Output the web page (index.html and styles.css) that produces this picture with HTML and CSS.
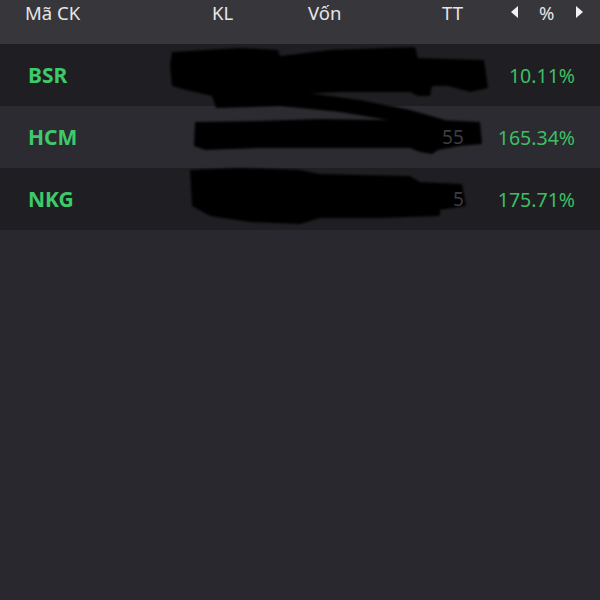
FILE: index.html
```html
<!DOCTYPE html>
<html>
<head>
<meta charset="utf-8">
<link rel="stylesheet" href="styles.css">
</head>
<body>
<div class="app">
  <div class="head">
    <div class="c-sym">Mã CK</div>
    <div class="c-kl">KL</div>
    <div class="c-von">Vốn</div>
    <div class="c-tt">TT</div>
    <div class="c-pct">
      <span class="tri tri-l"></span>
      <span>%</span>
      <span class="tri tri-r"></span>
    </div>
  </div>
  <div class="rows">
    <div class="row dark"><div class="sym">BSR</div><div class="val">10.11%</div></div>
    <div class="row light"><div class="sym">HCM</div><div class="ghost">55</div><div class="val">165.34%</div></div>
    <div class="row dark"><div class="sym">NKG</div><div class="ghost">5</div><div class="val">175.71%</div></div>
    <svg class="redact" width="600" height="190" viewBox="0 44 600 190">
      <filter id="b"><feGaussianBlur stdDeviation="1.2"/></filter>
      <g fill="#040405" filter="url(#b)">
        <path d="M172 52 L240 48 L278 50 L280 56 L330 50 L415 47 L418 58 L484 60 L488 88 L470 92 L448 86 L432 86 L430 96 L418 96 L410 92 L340 92 L300 94 L250 100 L216 108 L212 96 L186 90 L172 86 L170 66 Z"/>
        <path d="M216 98 L300 92 L360 100 L410 110 L445 120 L440 126 L400 122 L340 112 L280 106 L218 108 Z"/>
        <path d="M195 122 L260 121 L320 119 L380 120 L440 120 L480 122 L482 144 L460 146 L438 150 L432 154 L420 152 L410 148 L340 148 L260 148 L205 150 L194 146 Z"/>
        <path d="M190 170 L240 168 L300 170 L320 174 L410 176 L420 182 L462 184 L466 206 L440 210 L440 216 L380 218 L320 218 L300 224 L250 222 L210 216 L192 206 Z"/>
      </g>
    </svg>
  </div>
</div>
</body>
</html>
```
FILE: styles.css
```css
html, body {
  margin: 0;
  padding: 0;
  background: #29282e;
}
.app {
  width: 600px;
  height: 600px;
  background: #29282e;
  font-family: "Noto Sans", "Open Sans", sans-serif;
  overflow: hidden;
}
.head {
  height: 44px;
  background: #37373b;
  color: #e6e6e8;
  font-size: 18.5px;
  display: flex;
  align-items: center;
  padding-bottom: 20px;
  box-sizing: border-box;
}
.c-sym { margin-left: 25px; width: 187px; }
.c-kl { width: 96px; }
.c-von { width: 134px; }
.c-tt { width: 69px; }
.c-pct {
  display: flex;
  align-items: center;
}
.c-pct span:nth-child(2) { margin: 0 22px 0 21px; }
.tri {
  width: 0;
  height: 0;
  border-top: 6px solid transparent;
  border-bottom: 6px solid transparent;
}
.tri-l { border-right: 7px solid #f2f2f2; }
.tri-r { border-left: 7px solid #f2f2f2; }
.rows {
  position: relative;
}
.row {
  height: 62px;
  display: flex;
  align-items: center;
  padding: 0 25px 0 28px;
}
.row.dark { background: #1f1f23; }
.row.light { background: #2c2b31; }
.sym {
  color: #3ec96a;
  font-weight: 700;
  font-size: 21px;
  flex: 1;
}
.val {
  color: #3cbf62;
  font-size: 19.5px;
}
.ghost {
  color: #3c3c42;
  font-size: 19px;
  margin-right: 34px;
  position: relative;
  z-index: 2;
}
.redact {
  position: absolute;
  left: 0;
  top: 0;
  z-index: 1;
  pointer-events: none;
}
```
